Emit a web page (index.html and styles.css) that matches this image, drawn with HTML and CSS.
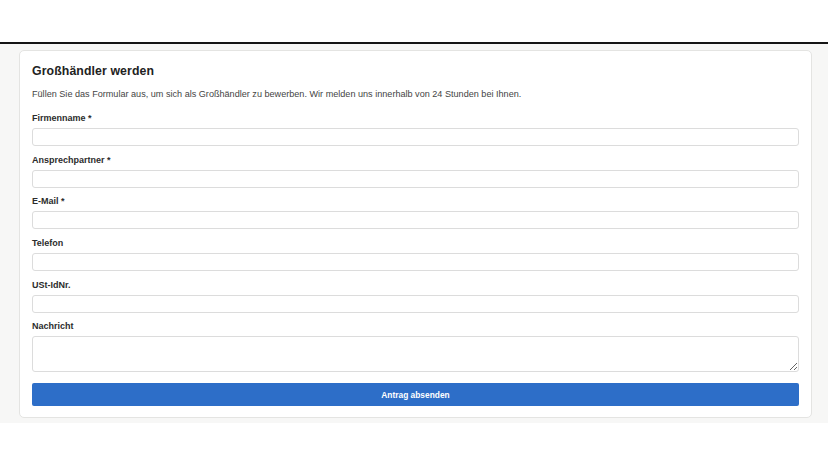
FILE: index.html
```html
<!DOCTYPE html>
<html lang="de">
<head>
  <meta charset="UTF-8" />
  <meta name="viewport" content="width=device-width, initial-scale=1.0" />
  <title>Großhändler werden</title>
  <link rel="stylesheet" href="styles.css">
</head>
<body>
  <header class="site-header"></header>

  <main class="page">
    <!-- Wholesale application card -->
    <section class="card">
      <h1 class="card-title">Großhändler werden</h1>
      <p class="card-intro">Füllen Sie das Formular aus, um sich als Großhändler zu bewerben. Wir melden uns innerhalb von 24 Stunden bei Ihnen.</p>

      <form class="form">
        <div class="field">
          <label for="company">Firmenname *</label>
          <input type="text" id="company" />
        </div>
        <div class="field">
          <label for="contact">Ansprechpartner *</label>
          <input type="text" id="contact" />
        </div>
        <div class="field">
          <label for="email">E-Mail *</label>
          <input type="email" id="email" />
        </div>
        <div class="field">
          <label for="phone">Telefon</label>
          <input type="tel" id="phone" />
        </div>
        <div class="field">
          <label for="vat">USt-IdNr.</label>
          <input type="text" id="vat" />
        </div>
        <div class="field">
          <label for="message">Nachricht</label>
          <textarea id="message"></textarea>
        </div>
        <button type="button" class="submit">Antrag absenden</button>
      </form>
    </section>
  </main>
</body>
</html>
```

FILE: styles.css
```css
/* Reset */
* {
  margin: 0;
  padding: 0;
  box-sizing: border-box;
}
body {
  font-family: 'Liberation Sans', Arial, sans-serif;
  background: #fff;
  color: #333;
  -webkit-font-smoothing: antialiased;
}
/* Header strip */
.site-header {
  height: 44px;
  background: #fff;
  border-bottom: 2px solid #151515;
}
/* Page area */
.page {
  background: #f7f7f6;
  padding: 6px 16px 5px 19px;
}
.card {
  background: #fff;
  border: 1px solid #e4e4e2;
  border-radius: 5px;
  padding: 12px 12px 11px;
}
.card-title {
  font-size: 12.3px;
  line-height: 16px;
  font-weight: 700;
  color: #222;
  margin-bottom: 9px;
  letter-spacing: 0.1px;
}
.card-intro {
  font-size: 9.1px;
  line-height: 13px;
  color: #444;
  margin-bottom: 11px;
}
/* Form */
.form {
  display: flex;
  flex-direction: column;
  gap: 7.8px;
}
.field {
  display: flex;
  flex-direction: column;
  gap: 3.9px;
}
.field label {
  font-size: 9px;
  line-height: 12px;
  font-weight: 700;
  color: #2c2c2c;
}
.field input,
.field textarea {
  width: 100%;
  height: 18px;
  border: 1px solid #dcdcdc;
  border-radius: 3px;
  background: #fff;
  font-family: inherit;
  font-size: 9px;
  outline: none;
}
.field textarea {
  height: 36px;
  resize: vertical;
}
.submit {
  margin-top: 3px;
  height: 23px;
  border: none;
  border-radius: 2px;
  background: #2d6ec8;
  color: #fff;
  font-family: inherit;
  font-size: 8.4px;
  font-weight: 700;
  cursor: pointer;
}
```
